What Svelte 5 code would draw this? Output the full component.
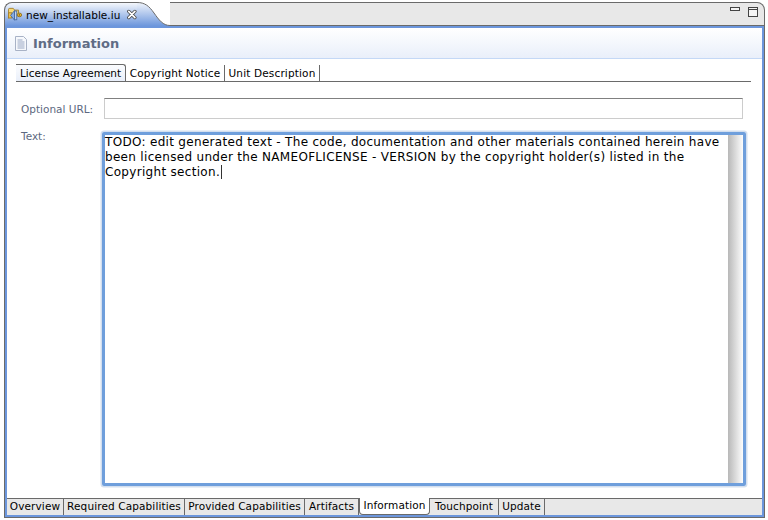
<script>
  // widths come from the measured tab dividers
  const pages = [
    { label: 'Overview', width: 57 },
    { label: 'Required Capabilities', width: 121 },
    { label: 'Provided Capabilities', width: 120 },
    { label: 'Artifacts', width: 54 },
    { label: 'Information', width: 71, active: true },
    { label: 'Touchpoint', width: 69 },
    { label: 'Update', width: 46 }
  ];
  const subTabs = [
    { label: 'License Agreement', width: 110, active: true },
    { label: 'Copyright Notice', width: 99 },
    { label: 'Unit Description', width: 95 }
  ];
</script>

<div class="editor">
  <div class="tabstrip">
    <div class="file-tab">
      <svg class="iu-icon" width="16" height="15" viewBox="0 0 16 15">
        <path d="M.5 12V2Q.5.500 2 .500h4l1.500 2H12V6" fill="#f6d878" stroke="#a07c28" />
        <path d="M.5 5.500h4v6h-4z" fill="#eec050" stroke="#a07c28" />
        <path d="M3 8.500L7.500 3v11z" fill="#86ace6" stroke="#44689f" />
        <rect x="7.500" y="3.500" width="2.500" height="10" fill="#c4d6f4" stroke="#44689f" />
        <rect x="10.500" y="6" width="5" height="4" rx="2" fill="#f4c838" stroke="#8c6818" />
        <circle cx="13" cy="8" r="1" fill="#8c6818" />
      </svg>
      <span class="file-name">new_installable.iu</span>
      <svg class="close" width="11" height="11" viewBox="0 0 11 11">
        <path d="M2 2l7 7M9 2l-7 7" stroke="#444" stroke-width="3.800" stroke-linecap="round" />
        <path d="M2 2l7 7M9 2l-7 7" stroke="#fff" stroke-width="2" stroke-linecap="round" />
      </svg>
    </div>
    <svg class="tab-curve" width="33" height="24" viewBox="0 0 33 24" preserveAspectRatio="none">
      <defs>
        <linearGradient id="tabfill" x1="0" y1="0" x2="0" y2="1">
          <stop offset="0" stop-color="#f4f7fc" />
          <stop offset="1" stop-color="#6c96dc" />
        </linearGradient>
      </defs>
      <path d="M0 0C8 0 12 4 17 11C22 18 26 23.500 33 23.500V24H0Z" fill="url(#tabfill)" />
      <path d="M0 .5C8 .5 12 4 17 11C22 18 26 23.500 33 23.500" fill="none" stroke="#6a6a6a" />
    </svg>
    <div class="strip-rest">
      <span class="min-btn"></span>
      <span class="max-btn"></span>
    </div>
  </div>

  <div class="body">
    <header class="form-head">
      <svg width="12" height="15" viewBox="0 0 12 15">
        <path d="M.5.500h8l3 3v11H.5z" fill="#f6f8fc" stroke="#a8b2c6" />
        <path d="M2.500 4h5M2.500 6h7M2.500 8h7M2.500 10h7M2.500 12h7" stroke="#9aa8c4" />
      </svg>
      <h1>Information</h1>
    </header>

    <div class="content">
      <div class="subtabs">
        {#each subTabs as tab}
          <div class="subtab" class:active={tab.active} style="width: {tab.width}px">{tab.label}</div>
        {/each}
      </div>

      <div class="form">
        <label class="lbl url-lbl" for="url">Optional URL:</label>
        <div class="url-input" id="url"></div>
        <span class="lbl text-lbl">Text:</span>
        <div class="textbox">
          <div class="text">
            TODO: edit generated text - The code, documentation and other materials contained herein have<br />
            been licensed under the NAMEOFLICENSE - VERSION by the copyright holder(s) listed in the<br />
            Copyright section.<span class="caret"></span>
          </div>
          <div class="scrollbar"></div>
        </div>
      </div>
    </div>

    <nav class="pages">
      {#each pages as page}
        <div class="page" class:active={page.active} style="width: {page.width}px">{page.label}</div>
      {/each}
    </nav>
  </div>
</div>

<style>
  :global(body) {
    margin: 0;
    background: #fff;
  }
  .editor {
    width: 761px;
    height: 516px;
    margin: 2px 0 0 4px;
    display: flex;
    flex-direction: column;
    font-family: "DejaVu Sans", sans-serif;
    font-size: 10.5px;
    color: #000;
  }
  .tabstrip {
    display: flex;
    height: 24px;
    flex: none;
  }
  .file-tab {
    width: 133px;
    display: flex;
    align-items: center;
    gap: 3px;
    padding-left: 3px;
    border-top: 1px solid #6a6a6a;
    border-left: 1px solid #6a6a6a;
    border-top-left-radius: 8px;
    background: linear-gradient(#f4f7fc, #6c96dc);
    box-sizing: border-box;
  }
  .file-name {
    width: 97px;
    padding-left: 1px;
    letter-spacing: 0.03px;
    white-space: nowrap;
  }
  .close {
    margin-left: 4px;
  }
  .tab-curve {
    display: block;
    flex: none;
  }
  .strip-rest {
    flex: 1;
    display: flex;
    justify-content: flex-end;
    align-items: flex-start;
    gap: 8px;
    padding: 4px 6px 0 0;
    border-top: 1px solid #6a6a6a;
    border-bottom: 1px solid #6a6a6a;
    border-right: 1px solid #6a6a6a;
    border-top-right-radius: 8px;
    background: #e8e8e8;
    box-sizing: border-box;
  }
  .min-btn {
    width: 8px;
    height: 2px;
    border: 1px solid #444;
    background: #f4f4f4;
  }
  .max-btn {
    width: 8px;
    height: 8px;
    border: 1px solid #444;
    background: linear-gradient(#f4f4f4 0 1px, #444 1px 2px, #f4f4f4 2px);
  }
  .body {
    flex: 1;
    display: flex;
    flex-direction: column;
    min-height: 0;
    border: 1px solid #6a6a6a;
    border-top: 0;
    box-shadow: inset 2px 2px 0 #6c96dc, inset -2px -2px 0 #6c96dc;
    padding: 2px;
  }
  .form-head {
    flex: none;
    height: 30px;
    display: flex;
    align-items: center;
    gap: 6px;
    padding-left: 8px;
    background: linear-gradient(#fff, #e9effa);
    border-bottom: 1px solid #c4d8f6;
  }
  .form-head h1 {
    margin: 0;
    font-size: 13px;
    font-weight: bold;
    color: #5f6c85;
  }
  .content {
    flex: 1;
    padding: 6px 11px 0 9px;
    background: #fff;
  }
  .subtabs {
    display: flex;
    height: 16px;
    border-bottom: 1px solid #6a6a6a;
  }
  .subtab {
    box-sizing: border-box;
    padding-top: 2px;
    text-align: center;
    border-right: 1px solid #6a6a6a;
    white-space: nowrap;
    letter-spacing: 0.15px;
  }
  .subtab.active {
    background: linear-gradient(#fbfcfe, #e9effa);
    border-top: 1px solid #6a6a6a;
    border-top-right-radius: 3px;
    margin-top: -1px;
    letter-spacing: 0;
  }
  .form {
    display: grid;
    grid-template-columns: 88px 1fr;
    row-gap: 13px;
    margin-top: 16px;
    margin-right: 5px;
  }
  .lbl {
    color: #5c6880;
    padding-left: 5px;
  }
  .url-lbl {
    align-self: center;
  }
  .text-lbl {
    margin-top: -2px;
  }
  .url-input {
    height: 19px;
    border: 1px solid #ccc;
    border-top-color: #808080;
    background: #fff;
    margin-right: 3px;
  }
  .textbox {
    height: 354px;
    box-sizing: border-box;
    margin-left: -2px;
    display: flex;
    border: 3px solid #6f9fdc;
    border-radius: 2px;
    box-shadow: 0 0 0 1.500px #d3dfef;
  }
  .text {
    flex: 1;
    font-size: 12px;
    letter-spacing: 0.31px;
    line-height: 15px;
    white-space: nowrap;
  }
  .caret {
    display: inline-block;
    width: 1px;
    height: 14px;
    margin-left: 1px;
    background: #333;
    vertical-align: -3px;
  }
  .scrollbar {
    width: 15px;
    background: linear-gradient(90deg, #b8b8b8, #fdfdfd);
  }
  .pages {
    flex: none;
    height: 16px;
    display: flex;
    background: #e8e8e8;
    border-top: 1px solid #6a6a6a;
  }
  .page {
    box-sizing: border-box;
    padding-top: 1px;
    text-align: center;
    border-right: 1px solid #6a6a6a;
    white-space: nowrap;
    letter-spacing: 0.12px;
  }
  .page.active {
    background: #fff;
    margin-top: -1px;
    height: 17px;
    border-bottom: 1px solid #6a6a6a;
    border-left: 1px solid #6a6a6a;
    border-radius: 0 0 4px 4px;
  }
</style>
